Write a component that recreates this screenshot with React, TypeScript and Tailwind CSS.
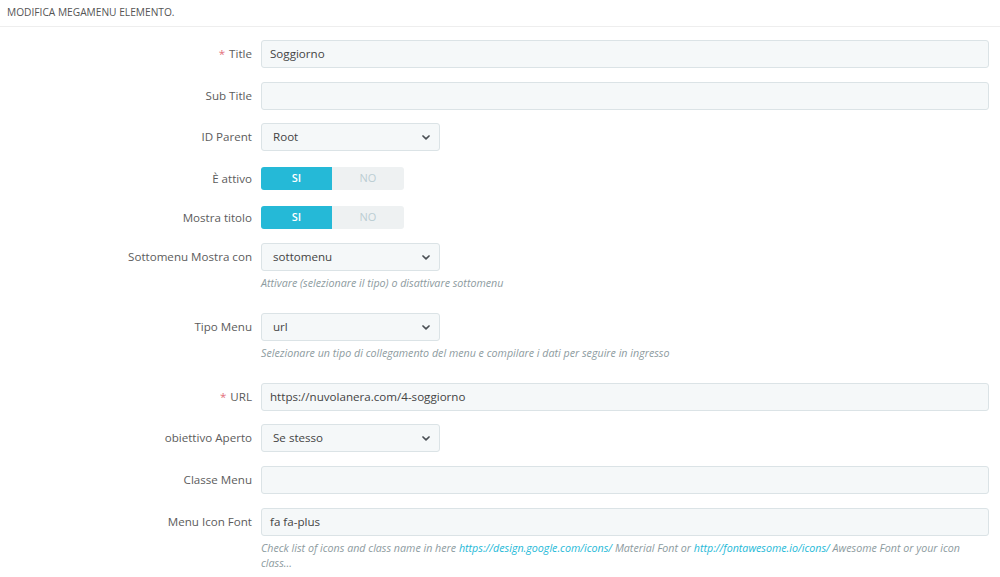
import type { ReactNode } from 'react';

const font = { fontFamily: '"Open Sans", "Noto Sans", sans-serif' };

function Chevron() {
  return (
    <svg width="8" height="5" viewBox="0 0 8 5" className="absolute right-[9px] top-[11px]">
      <path d="M1 1l3 2.8L7 1" fill="none" stroke="#4a4f55" strokeWidth="1.7" strokeLinecap="round" strokeLinejoin="round" />
    </svg>
  );
}

function Row({ label, required, mt, children, help }: { label: string; required?: boolean; mt: string; children: ReactNode; help?: ReactNode }) {
  return (
    <div className={`flex items-start gap-[9px] ${mt}`}>
      <div className="flex h-[28px] w-[252px] shrink-0 items-center justify-end text-[11.6px] text-[#5c5c5c]">
        {required && <span className="mr-[4px] text-[#e3707c]">*</span>}
        {label}
      </div>
      <div className="flex-1 pr-[11px]">
        {children}
        {help && <div className="mt-[5px] text-[10.7px] italic leading-[15px] text-[#8d9ba0]">{help}</div>}
      </div>
    </div>
  );
}

function TextInput({ value }: { value?: string }) {
  return (
    <div className="flex h-[28px] items-center rounded-[3px] border border-[#dbe3e6] bg-[#f5f8f9] px-[8px] text-[11.6px] text-[#444]">
      {value}
    </div>
  );
}

function Select({ value }: { value: string }) {
  return (
    <div className="relative flex h-[28px] w-[179px] items-center rounded-[3px] border border-[#dbe3e6] bg-[#f5f8f9] px-[11px] text-[11.6px] text-[#444]">
      {value}
      <Chevron />
    </div>
  );
}

function Switch() {
  return (
    <div className="flex h-[23px] w-[143px] overflow-hidden rounded-[3px] text-[11px]">
      <div className="flex w-[71px] items-center justify-center bg-[#25b9d7] font-semibold text-white">SI</div>
      <div className="flex flex-1 items-center justify-center bg-[#eef1f2] text-[#bbcdd2]">NO</div>
    </div>
  );
}

export default function App() {
  return (
    <div className="h-[577px] w-[1000px] overflow-hidden bg-white" style={font}>
      <div className="flex h-[27px] items-center border-b border-[#eeeeee] px-[7px] text-[10.2px] text-[#555]">
        MODIFICA MEGAMENU ELEMENTO.
      </div>
      <Row label="Title" required mt="mt-[13px]">
        <TextInput value="Soggiorno" />
      </Row>
      <Row label="Sub Title" mt="mt-[14px]">
        <TextInput />
      </Row>
      <Row label="ID Parent" mt="mt-[13px]">
        <Select value="Root" />
      </Row>
      <div className="mt-[16px] flex items-center gap-[9px]">
        <div className="w-[252px] text-right text-[11.6px] text-[#5c5c5c]">È attivo</div>
        <Switch />
      </div>
      <div className="mt-[16px] flex items-center gap-[9px]">
        <div className="w-[252px] text-right text-[11.6px] text-[#5c5c5c]">Mostra titolo</div>
        <Switch />
      </div>
      <Row label="Sottomenu Mostra con" mt="mt-[14px]" help="Attivare (selezionare il tipo) o disattivare sottomenu">
        <Select value="sottomenu" />
      </Row>
      <Row label="Tipo Menu" mt="mt-[22px]" help="Selezionare un tipo di collegamento del menu e compilare i dati per seguire in ingresso">
        <Select value="url" />
      </Row>
      <Row label="URL" required mt="mt-[22px]">
        <TextInput value="https://nuvolanera.com/4-soggiorno" />
      </Row>
      <Row label="obiettivo Aperto" mt="mt-[13px]">
        <Select value="Se stesso" />
      </Row>
      <Row label="Classe Menu" mt="mt-[14px]">
        <TextInput />
      </Row>
      <Row
        label="Menu Icon Font"
        mt="mt-[14px]"
        help={
          <>
            Check list of icons and class name in here{' '}
            <span className="text-[#25b9d7]">https://design.google.com/icons/</span> Material Font or{' '}
            <span className="text-[#25b9d7]">http://fontawesome.io/icons/</span> Awesome Font or your icon class...
          </>
        }
      >
        <TextInput value="fa fa-plus" />
      </Row>
    </div>
  );
}
